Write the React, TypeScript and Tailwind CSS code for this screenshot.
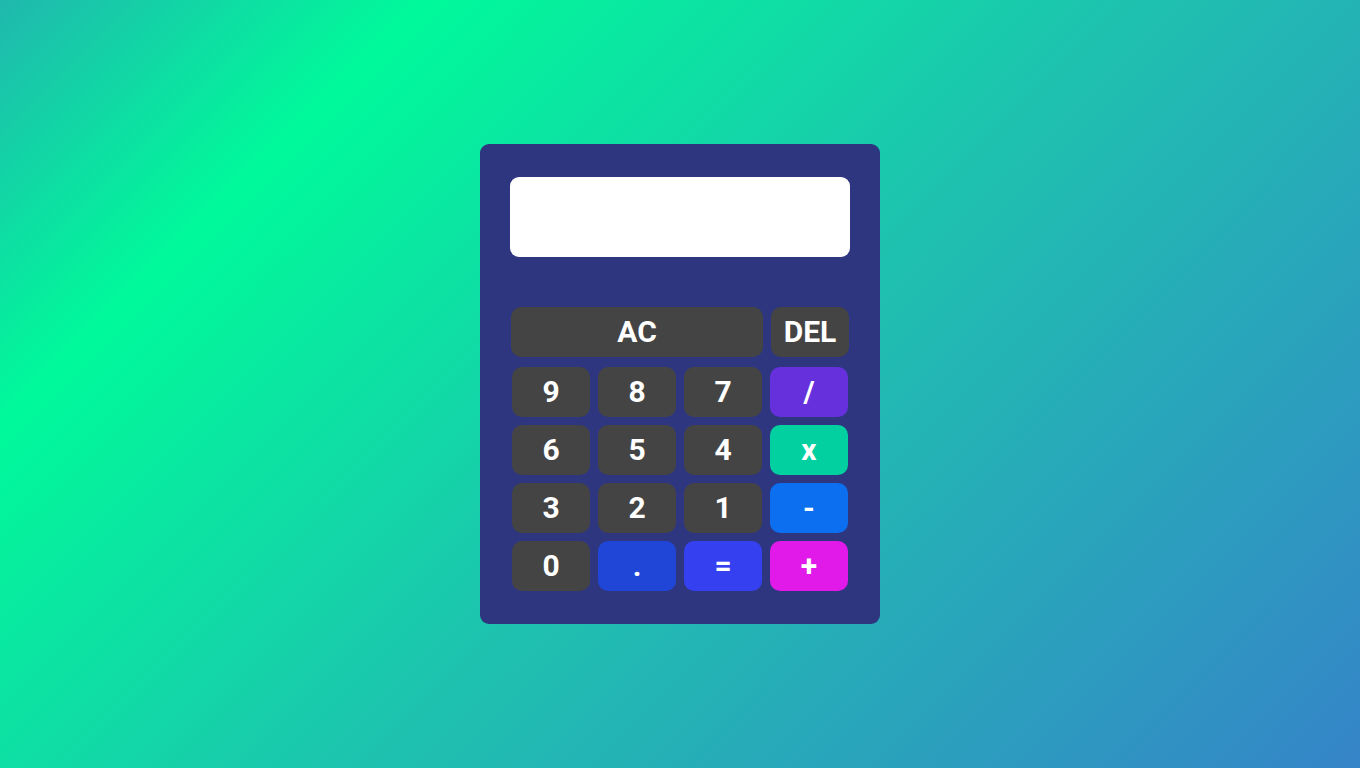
const keys: { label: string; color: string }[] = [
  { label: "9", color: "bg-[#444444]" },
  { label: "8", color: "bg-[#444444]" },
  { label: "7", color: "bg-[#444444]" },
  { label: "/", color: "bg-[#6630dc]" },
  { label: "6", color: "bg-[#444444]" },
  { label: "5", color: "bg-[#444444]" },
  { label: "4", color: "bg-[#444444]" },
  { label: "x", color: "bg-[#03d0a0]" },
  { label: "3", color: "bg-[#444444]" },
  { label: "2", color: "bg-[#444444]" },
  { label: "1", color: "bg-[#444444]" },
  { label: "-", color: "bg-[#0c6ff0]" },
  { label: "0", color: "bg-[#444444]" },
  { label: ".", color: "bg-[#2046d8]" },
  { label: "=", color: "bg-[#3541f0]" },
  { label: "+", color: "bg-[#e11ae9]" },
];

export default function App() {
  return (
    <div
      className="min-h-screen w-full flex items-center justify-center bg-[linear-gradient(135deg,#20b8ae_0%,#00fa9a_20%,#1fbfb0_55%,#3584c8_100%)]"
      style={{ fontFamily: "Roboto, 'Liberation Sans', sans-serif" }}
    >
      <div className="w-[400px] h-[480px] bg-[#2e3680] rounded-[9px] px-[30px] pt-[33px]">
        <div className="h-[80px] w-full bg-white rounded-[9px]"></div>
        <div className="mt-[50px] flex gap-[8px] pl-[1px]">
          <button className="w-[252px] h-[50px] rounded-[10px] bg-[#444444] text-white text-[30px] font-bold leading-none">
            AC
          </button>
          <button className="w-[78px] h-[50px] rounded-[10px] bg-[#444444] text-white text-[30px] font-bold leading-none">
            DEL
          </button>
        </div>
        <div className="mt-[10px] grid grid-cols-[repeat(4,78px)] gap-[8px] pl-[2px]">
          {keys.map((k) => (
            <button
              key={k.label}
              className={`h-[50px] rounded-[10px] ${k.color} text-white text-[30px] font-bold leading-none`}
            >
              {k.label}
            </button>
          ))}
        </div>
      </div>
    </div>
  );
}
